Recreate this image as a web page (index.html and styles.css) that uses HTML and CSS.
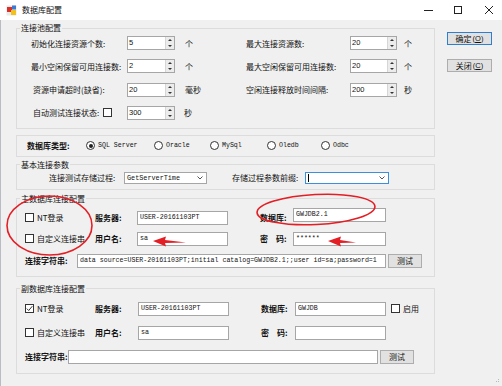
FILE: index.html
```html
<!DOCTYPE html>
<html lang="zh-CN">
<head>
  <meta charset="UTF-8">
  <title>数据库配置</title>
  <link rel="stylesheet" href="styles.css">
</head>
<body>
<div class="window">

  <!-- 标题栏 -->
  <div class="titlebar">
    <svg class="app-icon" viewBox="0 0 11 11">
      <rect x="0.5" y="0.5" width="10" height="10" fill="#e9e9e9"/>
      <rect x="1" y="2" width="5" height="5" fill="#d9302a"/>
      <rect x="6" y="0.5" width="4" height="4" fill="#3b79d4"/>
      <rect x="5" y="5" width="5" height="5" fill="#f2c21b"/>
    </svg>
    <span class="title">数据库配置</span>
    <div class="caption">
      <span class="cap"><svg width="9" height="9" viewBox="0 0 9 9"><path d="M0 4.5h9" stroke="#222" stroke-width="1"/></svg></span>
      <span class="cap"><svg width="8" height="8" viewBox="0 0 8 8"><rect x="0.5" y="0.5" width="7" height="7" fill="none" stroke="#222"/></svg></span>
      <span class="cap close"><svg width="8" height="8" viewBox="0 0 8 8"><path d="M0 0L8 8M8 0L0 8" stroke="#222" stroke-width="1"/></svg></span>
    </div>
  </div>

  <div class="client">
    <div class="main">

      <!-- 连接池配置 -->
      <fieldset class="group">
        <legend>连接池配置</legend>
        <div class="pool-grid">
          <span>初始化连接资源个数:</span>
          <div class="spin"><span class="val">5</span><span class="arrows"><i class="up"></i><i class="down"></i></span></div>
          <span class="unit">个</span>
          <span>最大连接资源数:</span>
          <div class="spin"><span class="val">20</span><span class="arrows"><i class="up"></i><i class="down"></i></span></div>
          <span class="unit r">个</span>

          <span>最小空闲保留可用连接数:</span>
          <div class="spin"><span class="val">2</span><span class="arrows"><i class="up"></i><i class="down"></i></span></div>
          <span class="unit">个</span>
          <span>最大空闲保留可用连接数:</span>
          <div class="spin"><span class="val">20</span><span class="arrows"><i class="up"></i><i class="down"></i></span></div>
          <span class="unit r">个</span>

          <span class="pad">资源申请超时(缺省):</span>
          <div class="spin"><span class="val">20</span><span class="arrows"><i class="up"></i><i class="down"></i></span></div>
          <span class="unit">毫秒</span>
          <span>空闲连接释放时间间隔:</span>
          <div class="spin"><span class="val">200</span><span class="arrows"><i class="up"></i><i class="down"></i></span></div>
          <span class="unit r">秒</span>

          <span class="auto pad">自动测试连接状态:<span class="check"></span></span>
          <div class="spin"><span class="val">300</span><span class="arrows"><i class="up"></i><i class="down"></i></span></div>
          <span class="unit s">秒</span>
        </div>
      </fieldset>

      <!-- 数据库类型 -->
      <fieldset class="group dbtype">
        <div class="type-row">
          <span class="type-label">数据库类型:</span>
          <span class="radio w68"><span class="dot on"></span>SQL Server</span>
          <span class="radio w56"><span class="dot"></span>Oracle</span>
          <span class="radio w57"><span class="dot"></span>MySql</span>
          <span class="radio w54"><span class="dot"></span>Oledb</span>
          <span class="radio"><span class="dot"></span>Odbc</span>
        </div>
      </fieldset>

      <!-- 基本连接参数 -->
      <fieldset class="group basic">
        <legend>基本连接参数</legend>
        <div class="basic-row">
          <span class="proc-label">连接测试存储过程:</span>
          <div class="combo"><span class="txt">GetServerTime</span><svg width="6" height="4" viewBox="0 0 6 4"><path d="M0.5 0.5L3 3L5.5 0.5" fill="none" stroke="#555"/></svg></div>
          <span class="prefix-label">存储过程参数前缀:</span>
          <div class="combo focus"><span class="caret"></span><span class="txt"></span><svg width="6" height="4" viewBox="0 0 6 4"><path d="M0.5 0.5L3 3L5.5 0.5" fill="none" stroke="#555"/></svg></div>
        </div>
      </fieldset>

      <!-- 主数据库连接配置 -->
      <fieldset class="group conn master">
        <legend>主数据库连接配置</legend>
        <div class="conn-row">
          <span class="opt"><span class="check"></span>NT登录</span>
          <span class="lbl">服务器:</span>
          <input class="field" type="text" value="USER-20161103PT">
          <span class="lbl right">数据库:</span>
          <input class="field up" type="text" value="GWJDB2.1">
        </div>
        <div class="conn-row">
          <span class="opt"><span class="check"></span>自定义连接串</span>
          <span class="lbl">用户名:</span>
          <input class="field" type="text" value="sa">
          <span class="lbl right">密　码:</span>
          <input class="field" type="text" value="******">
        </div>
        <div class="conn-row">
          <span class="lbl str">连接字符串:</span>
          <input class="field long" type="text" value="data source=USER-20161103PT;initial catalog=GWJDB2.1;;user id=sa;password=1">
          <button class="btn test">测试</button>
        </div>
      </fieldset>

      <!-- 副数据库连接配置 -->
      <fieldset class="group conn slave">
        <legend>副数据库连接配置</legend>
        <div class="conn-row">
          <span class="opt"><span class="check on"><svg width="7" height="7" viewBox="0 0 7 7"><path d="M0.8 3.6L2.7 5.5L6.3 1.2" fill="none" stroke="#333" stroke-width="1"/></svg></span>NT登录</span>
          <span class="lbl">服务器:</span>
          <input class="field" type="text" value="USER-20161103PT">
          <span class="lbl right">数据库:</span>
          <input class="field" type="text" value="GWJDB">
          <span class="opt enable"><span class="check"></span>启用</span>
        </div>
        <div class="conn-row">
          <span class="opt"><span class="check"></span>自定义连接串</span>
          <span class="lbl">用户名:</span>
          <input class="field" type="text" value="sa">
          <span class="lbl right">密　码:</span>
          <input class="field" type="text" value="">
        </div>
        <div class="conn-row">
          <span class="lbl str">连接字符串:</span>
          <input class="field long" type="text" value="">
          <button class="btn test">测试</button>
        </div>
      </fieldset>
    </div>

    <div class="side">
      <button class="btn default">确定<span class="key">(<u>O</u>)</span></button>
      <button class="btn">关闭<span class="key">(<u>C</u>)</span></button>
    </div>
  </div>

  <!-- 红色标注 -->
  <svg class="marks" width="502" height="386" viewBox="0 0 502 386">
    <ellipse cx="49.5" cy="225.5" rx="42.5" ry="29.5" fill="none" stroke="#e41e25" stroke-width="1.6"/>
    <ellipse cx="316" cy="209.5" rx="59" ry="15" transform="rotate(-3 316 209.5)" fill="none" stroke="#e41e25" stroke-width="1.6"/>
    <polygon points="153,241 166,236.5 165,240 186,242.6 165,243 166,246.5" fill="#e41e25"/>
    <polygon points="328,241 341,236.5 340,240 356,242.6 340,243 341,246.5" fill="#e41e25"/>
    <g fill="#b8b8b8">
      <rect x="498" y="379" width="1" height="1"/>
      <rect x="496" y="381" width="1" height="1"/>
      <rect x="498" y="381" width="1" height="1"/>
    </g>
  </svg>
</div>
</body>
</html>
```

FILE: styles.css
```css
* {
  box-sizing: border-box;
  margin: 0;
  padding: 0;
}

html, body {
  width: 502px;
  height: 386px;
  overflow: hidden;
}

body {
  font-family: "Noto Sans CJK SC", "Noto Sans", sans-serif;
  font-size: 8px;
  color: #111;
  background: #f0f0f0;
}

.window {
  position: relative;
  width: 502px;
  height: 386px;
}

/* 标题栏 */
.titlebar {
  height: 20px;
  background: #fff;
  display: flex;
  align-items: center;
}

.app-icon {
  width: 11px;
  height: 11px;
  margin-left: 6px;
}

.title {
  margin-left: 5px;
  line-height: 12px;
}

.caption {
  margin-left: auto;
  display: flex;
}

.cap {
  width: 30px;
  height: 20px;
  display: flex;
  align-items: center;
  justify-content: center;
}

.cap.close {
  width: 29px;
  justify-content: flex-end;
  padding-right: 9px;
}

/* 主体 */
.client {
  display: flex;
  height: 366px;
  border-left: 1px solid #b9bcc2;
}

.main {
  width: 434px;
  padding: 2px 0 0 15px;
}

.side {
  padding: 12px 0 0 12px;
  display: flex;
  flex-direction: column;
  gap: 14px;
}

.group {
  width: 419px;
  min-width: 0;
  border: 1px solid #dcdcdc;
}

.group legend {
  margin-left: 3px;
  padding: 0 1px;
  line-height: 12px;
}

/* 连接池配置 */
.pool-grid {
  display: grid;
  grid-template-columns: 96px 48px 71px 104px 47px auto;
  grid-auto-rows: 14px;
  row-gap: 9.33px;
  align-items: center;
  padding: 2px 0 8px 14px;
  white-space: nowrap;
}

.pool-grid .pad {
  padding-left: 2px;
}

.auto {
  display: flex;
  align-items: center;
}

.auto .check {
  margin-left: 4px;
}

.unit {
  padding-left: 10px;
}

.unit.s {
  padding-left: 9px;
}

.unit.r {
  padding-left: 7px;
}

.spin {
  height: 14px;
  display: flex;
  background: #fff;
  border: 1px solid #a6a6a6;
}

.spin .val {
  flex: 1;
  padding-left: 1px;
  font-family: "Liberation Sans", sans-serif;
  font-size: 7.5px;
  line-height: 12px;
}

.spin .arrows {
  width: 9px;
  display: flex;
  flex-direction: column;
  background: #ececec;
  border-left: 1px solid #d6d6d6;
}

.spin .arrows i {
  flex: 1;
  display: flex;
  align-items: center;
  justify-content: center;
}

.spin .arrows i::before {
  content: "";
  border-left: 2px solid transparent;
  border-right: 2px solid transparent;
}

.spin .arrows .up::before {
  border-bottom: 2px solid #333;
}

.spin .arrows .down::before {
  border-top: 2px solid #333;
}

.check {
  width: 9px;
  height: 9px;
  flex: none;
  display: inline-flex;
  align-items: center;
  justify-content: center;
  background: #fff;
  border: 1px solid #333;
}

/* 数据库类型 */
.dbtype {
  margin-top: 6px;
}

.type-row {
  height: 20px;
  display: flex;
  align-items: center;
  padding-left: 10px;
  font-family: "Liberation Mono", monospace;
  font-size: 6.6px;
}

.type-label {
  width: 59px;
  font-family: "Noto Sans CJK SC", sans-serif;
  font-size: 8px;
  font-weight: bold;
}

.radio {
  display: flex;
  align-items: center;
}

.w68 { width: 68px; }
.w56 { width: 56px; }
.w57 { width: 57px; }
.w54 { width: 54px; }

.dot {
  width: 9px;
  height: 9px;
  margin-right: 3px;
  border: 1px solid #333;
  border-radius: 50%;
  background: #fff;
  display: flex;
  align-items: center;
  justify-content: center;
}

.dot.on::after {
  content: "";
  width: 4px;
  height: 4px;
  border-radius: 50%;
  background: #222;
}

/* 基本连接参数 */
.basic {
  margin-top: 2px;
}

.basic-row {
  display: flex;
  align-items: center;
  padding: 1px 0 5px 32px;
}

.proc-label {
  width: 75px;
}

.prefix-label {
  width: 73px;
  margin-left: 25px;
}

.combo {
  width: 83px;
  height: 12px;
  display: flex;
  align-items: center;
  padding: 0 3px 0 2px;
  background: #fff;
  border: 1px solid #a6a6a6;
}

.combo.focus {
  width: 84px;
  border-color: #3c8fdc;
}

.combo .txt {
  flex: 1;
  font-family: "Liberation Mono", monospace;
  font-size: 6.8px;
}

.caret {
  width: 1px;
  height: 8px;
  background: #000;
}

/* 数据库连接配置 */
.master {
  margin-top: 3px;
}

.slave {
  margin-top: 6px;
}

.conn {
  padding: 6px 0 8px 8px;
}

.conn legend {
  margin-left: -5px;
}

.slave.conn {
  padding: 7px 0 9px 8px;
}

.conn-row {
  height: 14px;
  display: flex;
  align-items: center;
}

.master .conn-row + .conn-row {
  margin-top: 7px;
}

.master .conn-row:last-child {
  margin-top: 8px;
}

.slave .conn-row + .conn-row {
  margin-top: 10px;
}

.opt {
  width: 70px;
  display: flex;
  align-items: center;
  gap: 3px;
}

.opt.enable {
  width: auto;
  margin-left: 5px;
}

.lbl {
  width: 42px;
  font-weight: bold;
}

.lbl.right {
  width: 33px;
  margin-left: 32px;
}

.lbl.str {
  width: 52px;
}

.slave .lbl {
  width: 43px;
}

.slave .lbl.right {
  width: 34px;
}

.field {
  width: 91px;
  height: 14px;
  padding: 0 2px;
  border: 1px solid #a6a6a6;
  background: #fff;
  font-family: "Liberation Mono", monospace;
  font-size: 6.6px;
  color: #111;
  outline: none;
}

.master .field.up {
  width: 93px;
  position: relative;
  top: -3px;
}

.master .lbl.right + .field {
  width: 93px;
}

.field.long {
  width: 309px;
}

.slave .field.long {
  width: 310px;
}

/* 按钮 */
.btn {
  width: 45px;
  height: 13px;
  padding: 0;
  display: flex;
  align-items: center;
  justify-content: center;
  white-space: nowrap;
  background: #e1e1e1;
  border: 1px solid #adadad;
  font-family: "Noto Sans CJK SC", sans-serif;
  font-size: 8px;
  line-height: 11px;
  color: #111;
}

.btn .key {
  margin-left: 1px;
  font-family: "Liberation Sans", sans-serif;
  font-size: 7.5px;
}

.btn.default {
  border-color: #2f7fd0;
}

.btn.test {
  width: 34px;
  height: 14px;
  margin-left: 2px;
}

.marks {
  position: absolute;
  top: 0;
  left: 0;
  pointer-events: none;
}
```
